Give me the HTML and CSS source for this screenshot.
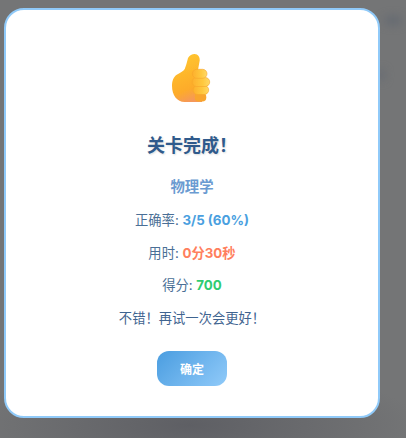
FILE: index.html
```html
<!DOCTYPE html>
<html lang="zh-CN">
<head>
    <meta charset="UTF-8">
    <title>关卡完成</title>
    <link rel="stylesheet" href="styles.css">
</head>
<body>
    <div class="backdrop">
        <span class="blur-spot spot-a"></span>
        <span class="blur-spot spot-b"></span>

        <div class="modal">
            <svg class="thumb" width="40" height="50" viewBox="0 0 40 50">
                <defs>
                    <linearGradient id="palm" x1="0.3" y1="0" x2="0.55" y2="1">
                        <stop offset="0" stop-color="#ffc62f"/>
                        <stop offset="0.75" stop-color="#fdab2a"/>
                        <stop offset="1" stop-color="#f5985a"/>
                    </linearGradient>
                    <linearGradient id="finger" x1="0" y1="0" x2="1" y2="0">
                        <stop offset="0" stop-color="#fdb02c"/>
                        <stop offset="0.6" stop-color="#ffc83e"/>
                        <stop offset="1" stop-color="#ffd965"/>
                    </linearGradient>
                    <filter id="soft"><feGaussianBlur stdDeviation="0.4"/></filter>
                </defs>
                <g filter="url(#soft)">
                    <path fill="url(#palm)" d="M16 5C17.500 2.500 20 1 22.700 1 26 1 28 4 27.700 7.500L26 17H30V49H12.700C5 49 0 42 0 33 0 27 2 24 4.300 22 9 19.500 11.500 18 12.700 16 14 13 15 9 16 5z"/>
                    <rect fill="#f9a52f" x="22.700" y="40" width="11.600" height="8.500" rx="4"/>
                    <rect fill="url(#finger)" stroke="#f7a52c" stroke-width="0.6" x="21" y="32.500" width="15.700" height="9" rx="4.500"/>
                    <rect fill="url(#finger)" stroke="#f7a52c" stroke-width="0.6" x="20" y="24.500" width="17.700" height="9" rx="4.500"/>
                    <rect fill="url(#finger)" stroke="#f7a52c" stroke-width="0.6" x="20.300" y="16.300" width="14.700" height="9" rx="4.500"/>
                </g>
            </svg>

            <h2 class="title">关卡完成！</h2>
            <p class="subject">物理学</p>
            <p class="stat">正确率: <strong class="accuracy">3/5 (60%)</strong></p>
            <p class="stat">用时: <strong class="time">0分30秒</strong></p>
            <p class="stat">得分: <strong class="score">700</strong></p>
            <p class="message">不错！再试一次会更好！</p>
            <button class="ok-btn">确定</button>
        </div>
    </div>
</body>
</html>
```

FILE: styles.css
```css
* {
    box-sizing: border-box;
}
html, body {
    height: 100%;
}
body {
    margin: 0;
    overflow: hidden;
    font-family: Inter, "Noto Sans CJK SC", sans-serif;
}
.backdrop {
    position: relative;
    height: 100%;
    padding: 8px 26px 20px 4px;
    background: radial-gradient(ellipse 230px 60px at 190px 425px, #5e5f64, rgba(94, 95, 100, 0)), #747576;
    overflow: hidden;
}
.blur-spot {
    position: absolute;
    background-color: #5f6670;
    border-radius: 50%;
    filter: blur(5px);
}
.spot-a {
    left: 384px;
    top: 17px;
    width: 18px;
    height: 7px;
}
.spot-b {
    left: 378px;
    top: 70px;
    width: 6px;
    height: 10px;
}
.modal {
    position: relative;
    width: 376px;
    height: 410px;
    padding-top: 43px;
    background-color: #fff;
    border: 2px solid #90caf9;
    border-radius: 20px;
    text-align: center;
}
.thumb {
    display: block;
    margin: 0 auto;
}
.title {
    margin: 31px 0 0;
    font-size: 18px;
    line-height: 24px;
    font-weight: 700;
    color: #2f5a8c;
    text-shadow: 1px 1px 2px rgba(0, 0, 0, 0.14);
}
.subject {
    margin: 19px 0 13px;
    font-size: 14.4px;
    line-height: 20px;
    font-weight: 700;
    color: #6b9bd1;
}
.stat {
    margin: 12px 0 0;
    font-size: 13.3px;
    line-height: 20.5px;
    color: #4a6f96;
}
.message {
    margin: 12px 0 0;
    font-size: 13.3px;
    line-height: 20.5px;
    color: #3f6490;
}
.accuracy {
    color: #4a9fe0;
}
.time {
    color: #ff7f5e;
}
.score {
    color: #2ecc71;
}
.ok-btn {
    display: block;
    width: 70px;
    height: 35px;
    margin: 23px auto 0;
    padding: 0;
    border: none;
    border-radius: 12px;
    background: linear-gradient(135deg, #4a9de0, #90caf9);
    color: #fff;
    font-family: inherit;
    font-size: 12px;
    font-weight: 700;
}
```
